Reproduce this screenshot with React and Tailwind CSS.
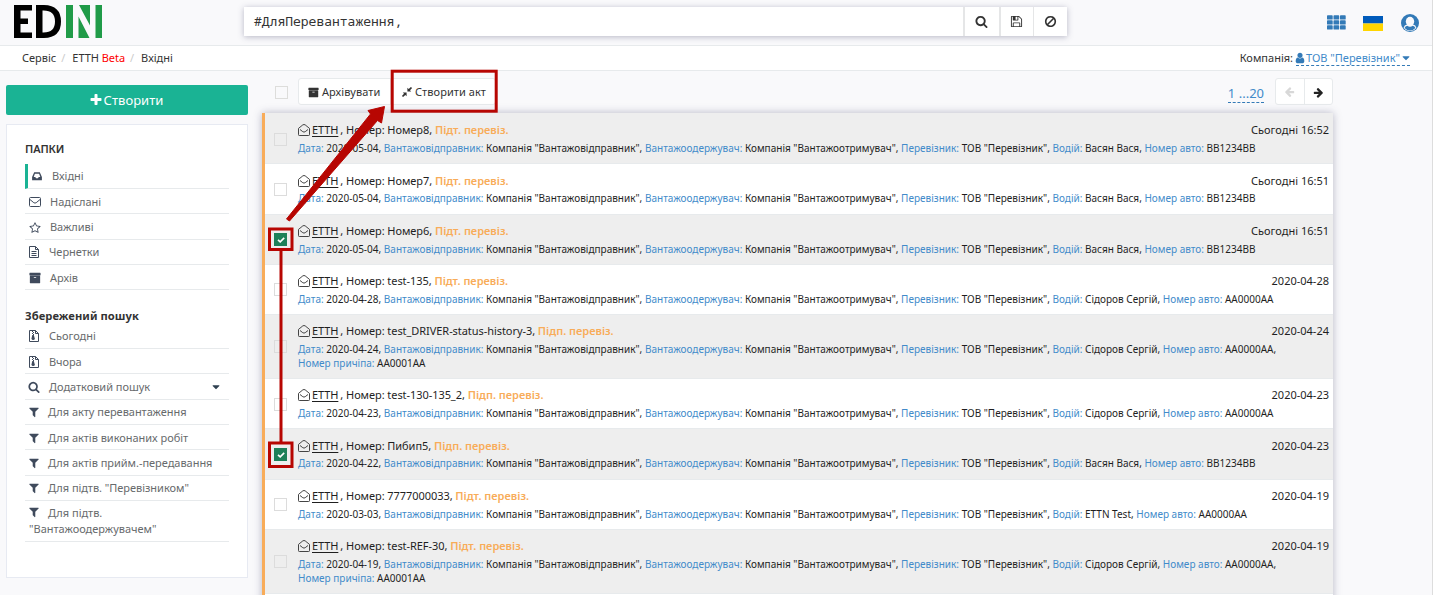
import React from "react";

const PATHS = {
  search: "M1216 832q0-185-131.5-316.5t-316.5-131.5-316.5 131.5-131.5 316.5 131.5 316.5 316.5 131.5 316.5-131.5 131.5-316.5zm512 832q0 52-38 90t-90 38q-54 0-90-38l-343-342q-179 124-399 124-143 0-273.5-55.5t-225-150-150-225-55.5-273.5 55.5-273.5 150-225 225-150 273.5-55.5 273.5 55.5 225 150 150 225 55.5 273.5q0 220-124 399l343 343q37 37 37 90z",
  filter: "M1595 295q17 41-14 70l-493 493v742q0 42-39 59-13 5-25 5-27 0-45-19l-256-256q-19-19-19-45v-486l-493-493q-31-29-14-70 17-39 59-39h1280q42 0 59 39z",
  star: "M1201 1004l306-297-422-62-189-382-189 382-422 62 306 297-73 421 378-199 377 199zm527-357q0 22-26 48l-363 354 86 500q1 7 1 20 0 50-41 50-19 0-40-12l-449-236-449 236q-22 12-40 12-21 0-31.5-14.5t-10.5-35.5q0-6 2-20l86-500-364-354q-25-27-25-48 0-37 56-46l502-73 225-455q19-41 49-41t49 41l225 455 502 73q56 9 56 46z",
  plus: "M1600 736v192q0 40-28 68t-68 28h-416v416q0 40-28 68t-68 28h-192q-40 0-68-28t-28-68v-416h-416q-40 0-68-28t-28-68v-192q0-40 28-68t68-28h416v-416q0-40 28-68t68-28h192q40 0 68 28t28 68v416h416q40 0 68 28t28 68z",
  arrow: "M1600 960q0 54-37 91l-651 651q-39 37-91 37-51 0-90-37l-75-75q-38-38-38-91t38-91l293-293h-704q-52 0-84.5-37.5t-32.5-90.5v-128q0-53 32.5-90.5t84.5-37.5h704l-293-294q-38-36-38-90t38-90l75-75q38-38 90-38 53 0 91 38l651 651q37 35 37 90z",
  ban: "M1440 893q0-161-87-295l-754 753q137 89 297 89 111 0 211.5-43.5t173.5-116.5 116-174.5 43-212.5zm-999 299l755-754q-135-91-300-91-148 0-273 73t-198 199-73 274q0 162 89 299zm1223-299q0 157-61 300t-163.5 246-245 164-298.5 61-298.5-61-245-164-163.5-246-61-300 61-299.5 163.5-245.5 245-164 298.5-61 298.5 61 245 164 163.5 245.5 61 299.5z",
  caret: "M1408 704q0 26-19 45l-448 448q-19 19-45 19t-45-19l-448-448q-19-19-19-45t19-45 45-19h896q26 0 45 19t19 45z",
  save: "M512 1536h768v-384h-768v384zm896 0h128v-896q0-14-10-38.5t-20-34.5l-281-281q-10-10-34-20t-39-10v416q0 40-28 68t-68 28h-576q-40 0-68-28t-28-68v-416h-128v1280h128v-416q0-40 28-68t68-28h832q40 0 68 28t28 68v416zm-384-928v-320q0-13-9.5-22.5t-22.5-9.5h-192q-13 0-22.5 9.5t-9.5 22.5v320q0 13 9.5 22.5t22.5 9.5h192q13 0 22.5-9.5t9.5-22.5zm640 32v928q0 40-28 68t-68 28h-1344q-40 0-68-28t-28-68v-1344q0-40 28-68t68-28h928q40 0 88 20t76 48l280 280q28 28 48 76t20 88z",
  archive: "M1088 832q0-26-19-45t-45-19h-256q-26 0-45 19t-19 45 19 45 45 19h256q26 0 45-19t19-45zm576-192v960q0 26-19 45t-45 19h-1408q-26 0-45-19t-19-45v-960q0-26 19-45t45-19h1408q26 0 45 19t19 45zm64-448v256q0 26-19 45t-45 19h-1536q-26 0-45-19t-19-45v-256q0-26 19-45t45-19h1536q26 0 45 19t19 45z",
  user: "M1536 1399q0 109-62.5 187t-150.5 78h-854q-88 0-150.5-78t-62.5-187q0-85 8.5-160.5t31.5-152 58.5-131 94-89 134.5-34.5q131 128 313 128t313-128q76 0 134.5 34.5t94 89 58.5 131 31.5 152 8.5 160.5zm-256-887q0 159-112.5 271.5t-271.5 112.5-271.5-112.5-112.5-271.5 112.5-271.5 271.5-112.5 271.5 112.5 112.5 271.5z",
};

function Fa({ name, className }) {
  return (
    <svg viewBox="0 0 1792 1792" fill="currentColor" className={`shrink-0 ${className}`}>
      <path d={PATHS[name]} />
    </svg>
  );
}

function SideIcon({ name }) {
  if (name === "mail")
    return (
      <svg viewBox="0 0 12 10" className="h-[10px] w-[12px]" fill="none" stroke="currentColor">
        <rect x=".5" y=".5" width="11" height="9" rx="1" />
        <path d="M.7 2.300 L4.800 5.700 Q6 6.500 7.200 5.700 L11.300 2.300" />
      </svg>
    );
  if (name === "doc" || name === "zip")
    return (
      <svg viewBox="0 0 10 12" className="h-[12px] w-[10px]" fill="none" stroke="currentColor">
        <path d="M.5 .5 H6.500 L9.500 3.500 V11.500 H.5 Z M6.500 .5 V3.500 H9.500" />
        {name === "doc" ? (
          <path d="M2.500 5.500 H7.500 M2.500 7.500 H7.500 M2.500 9.500 H7.500" />
        ) : (
          <>
            <path d="M3 1.500 H4 M4 2.500 H5 M3 3.500 H4 M4 4.500 H5" />
            <path d="M3.300 5 H4.800 L5.800 8.500 Q5.800 10 4.200 10 Q2.500 10 2.500 8.500 Z" fill="currentColor" stroke="none" />
          </>
        )}
      </svg>
    );
  if (name === "inbox")
    return (
      <svg viewBox="0 0 10 9" className="h-[9px] w-[10px]" fill="currentColor">
        <path fillRule="evenodd" d="M2.200 .2 H7.800 L9.900 5 V8.300 H.1 V5 Z M2.900 1.700 L1.700 5 H3.300 L4 6.200 H6 L6.700 5 H8.300 L7.100 1.700 Z" />
      </svg>
    );
  return <Fa name={name} className="-ml-px h-3 w-3" />;
}

function OpenLetter() {
  return (
    <svg viewBox="0 0 12 12" className="h-3 w-3 shrink-0" fill="none" stroke="#444" strokeWidth="1">
      <path d="M.5 4.400 L4.800 .9 Q6 .1 7.200 .9 L11.500 4.400 V10.700 Q11.500 11.500 10.700 11.500 H1.300 Q.5 11.500 .5 10.700 Z" />
      <path d="M2 5.500 L4.800 7.700 Q6 8.500 7.200 7.700 L10 5.500" />
    </svg>
  );
}

function Compress() {
  return (
    <svg viewBox="0 0 12 12" className="h-3 w-3 shrink-0" fill="currentColor">
      <path d="M6.400 5.600 V1.800 L7.700 3 L9.900 .9 L11.100 2.100 L9 4.300 L10.200 5.600 Z M5.600 6.400 V10.200 L4.300 9 L2.100 11.100 L.9 9.900 L3 7.700 L1.800 6.400 Z" />
    </svg>
  );
}

const FOLDERS = [
  { icon: "inbox", label: "Вхідні", box: "h-[25px] pl-[4px] border-l-[3px] border-l-[#1ab394]", gap: "w-[20px]" },
  { icon: "mail", label: "Надіслані", box: "h-[25px] pt-[2px] pl-1", gap: "w-[21px]" },
  { icon: "star", label: "Важливі", box: "h-[26px] pt-[2px] pl-[5px]", gap: "w-[20px]" },
  { icon: "doc", label: "Чернетки", box: "h-[25px] pl-1", gap: "w-[20px]" },
  { icon: "archive", label: "Архів", box: "h-[25px] pt-[2px] pl-[5px]", gap: "w-[20px]" },
];

const SAVED = [
  { icon: "zip", label: "Сьогодні", box: "h-[25px] pl-1", gap: "w-[20px]" },
  { icon: "zip", label: "Вчора", box: "h-[25px] pt-[2px] pl-1", gap: "w-[20px]" },
  { icon: "search", label: "Додатковий пошук", box: "h-[26px] pt-px pl-1", gap: "w-[20px]", caret: true },
  { icon: "filter", label: "Для акту перевантаження", box: "h-[25px] pl-1", gap: "w-[19px]" },
  { icon: "filter", label: "Для актів виконаних робіт", box: "h-[25px] pt-[2px] pl-1", gap: "w-[19px]" },
  { icon: "filter", label: "Для актів прийм.-передавання", box: "h-[26px] pt-px pl-1", gap: "w-[19px]" },
  { icon: "filter", label: 'Для підтв. "Перевізником"', box: "h-[25px] pl-1", gap: "w-[19px]" },
];

function SideItem({ item }) {
  return (
    <div className={`flex items-center border-b border-[#e7eaec] ${item.box}`}>
      <span className={`flex shrink-0 text-[#3f4a5c] ${item.gap}`}>
        <SideIcon name={item.icon} />
      </span>
      <span className="tracking-[-0.03px] whitespace-nowrap">{item.label}</span>
      {item.caret && <Fa name="caret" className="mr-[7px] ml-auto h-[12px] w-[12px] text-[#2f4050]" />}
    </div>
  );
}

const VASYAN = { driver: "Васян Вася", car: "ВВ1234ВВ" };
const SIDOROV = { driver: "Сідоров Сергій", car: "АА0000АА" };
const ROWS = [
  { no: "Номер8", status: "Підт. перевіз.", when: "Сьогодні 16:52", date: "2020-05-04", ...VASYAN, h: "h-[51px] pt-[8px]", sub: "mt-px", box: "pb-[5px]" },
  { no: "Номер7", status: "Підт. перевіз.", when: "Сьогодні 16:51", date: "2020-05-04", ...VASYAN, h: "h-[51px] pt-[8px]" },
  { no: "Номер6", status: "Підт. перевіз.", when: "Сьогодні 16:51", date: "2020-05-04", ...VASYAN, h: "h-[50px] pt-[7px]", sub: "mt-px", checked: true },
  { no: "test-135", status: "Підт. перевіз.", when: "2020-04-28", date: "2020-04-28", ...SIDOROV, h: "h-[50px] pt-[7px]", sub: "mt-px" },
  { no: "test_DRIVER-status-history-3", status: "Підп. перевіз.", when: "2020-04-24", date: "2020-04-24", ...SIDOROV, trailer: "АА0001АА", h: "h-[64px] pt-[7px]", sub: "mt-px" },
  { no: "test-130-135_2", status: "Підп. перевіз.", when: "2020-04-23", date: "2020-04-23", ...SIDOROV, h: "h-[50px] pt-[7px]", sub: "mt-px", box: "pb-[5px]" },
  { no: "Пибип5", status: "Підп. перевіз.", when: "2020-04-23", date: "2020-04-22", ...VASYAN, h: "h-[51px] pt-[8px]", checked: true },
  { no: "7777000033", status: "Підт. перевіз.", when: "2020-04-19", date: "2020-03-03", driver: "ETTN Test", car: "АА0000АА", h: "h-[50px] pt-[7px]", sub: "mt-px" },
  { no: "test-REF-30", status: "Підт. перевіз.", when: "2020-04-19", date: "2020-04-19", ...SIDOROV, trailer: "АА0001АА", h: "h-[64px] pt-[7px]", sub: "mt-px" },
  { no: "", h: "h-[50px]" },
];

function Key({ children }) {
  return <span className="text-[#428bca]">{children}</span>;
}

function Row({ row, index }) {
  const bg = index % 2 === 0 ? "bg-[#eeeeee]" : "bg-white";
  return (
    <div className={`flex shrink-0 border-b border-[#e7eaec] ${bg} ${row.h}`}>
      {row.no && (
        <>
          <div className={`flex w-[33px] shrink-0 items-center pl-[9px] ${row.box || "pb-[7px]"}`}>
            {row.checked ? (
              <span className="flex h-[13px] w-[13px] items-center justify-center bg-[#1d8159]">
                <svg viewBox="0 0 8 6" className="h-[6px] w-2" fill="none" stroke="#fff" strokeWidth="1.600">
                  <path d="M1 2.800 L3.200 4.900 L7.200 .9" />
                </svg>
              </span>
            ) : (
              <span className="h-[13px] w-[13px] border border-[#dcdcdc]" />
            )}
          </div>
          <div className="min-w-0 flex-1 pr-[4px] text-[#1f1f1f]">
            <div className="flex h-[18px] items-center text-[11px] whitespace-pre">
              <OpenLetter />
              <span className="ml-[2px] tracking-[-0.100px] underline underline-offset-2">ЕТТН</span>
              <span className="ml-[2px] tracking-[-0.060px]">, Номер: </span>
              <span className="tracking-[-0.060px]">{row.no}, </span>
              <span className="font-semibold text-[#f8ac59]">{row.status}</span>
              <span className="ml-auto">{row.when}</span>
            </div>
            <div className={`text-[10px] leading-[14px] tracking-[0.006px] whitespace-nowrap ${row.sub || ""}`}>
              <div className="h-px" />
              <Key>Дата:</Key> {row.date}, <Key>Вантажовідправник:</Key> Компанія "Вантажовідправник",{" "}
              <Key>Вантажоодержувач:</Key> Компанія "Вантажоотримувач", <Key>Перевізник:</Key> ТОВ "Перевізник",{" "}
              <Key>Водій:</Key> {row.driver}, <Key>Номер авто:</Key> {row.car}
              {row.trailer && (
                <>
                  ,<br />
                  <Key>Номер причіпа:</Key> {row.trailer}
                </>
              )}
            </div>
          </div>
        </>
      )}
    </div>
  );
}

function Header() {
  return (
    <header className="flex h-[46px] shrink-0 items-start border-b border-[#e7eaec]">
      <svg viewBox="0 0 90 34" className="mt-[4px] ml-[13px] h-[34px] w-[90px]">
        <path d="M1 1H19V6.500H7.500V14.500H15V20H7.500V28.500H19V34H1Z" fill="#000" />
        <path fillRule="evenodd" d="M23 1H31Q48 1.500 48 17.500Q48 33.500 31 34H23Z M29.500 6.500V28.500Q42 29 42 17.500Q42 6 29.500 6.500Z" fill="#000" />
        <path d="M53 1H60V34H53ZM82.500 1H89V34H82.500Z M66 1H77V21.500ZM65.500 12.500L76.500 34H65.500Z" fill="#209b48" />
      </svg>
      <div className="mt-[7px] ml-[141px] flex h-[29px] w-[823px] bg-white shadow-[0_1px_6px_rgba(60,60,100,0.35)]">
        <div className="flex flex-1 items-center pl-[10px] font-['Noto_Sans_Mono','DejaVu_Sans_Mono',monospace] text-[13px] text-[#333]">#ДляПеревантаження,</div>
        <div className="flex w-[36px] items-center justify-center border-l-2 border-[#e5e6e7]"><Fa name="search" className="-ml-px h-[13px] w-[13px]" /></div>
        <div className="flex w-[34px] items-center justify-center border-l-2 border-[#e5e6e7]"><Fa name="save" className="-ml-px h-[13px] w-[13px]" /></div>
        <div className="flex w-[34px] items-center justify-center border-l border-[#e5e6e7]"><Fa name="ban" className="-ml-px h-[13px] w-[13px]" /></div>
      </div>
      <div className="mt-[13px] ml-auto flex items-center pr-[13px] text-[#337ab7]">
        <svg viewBox="0 0 19 15" className="h-[15px] w-[19px]" fill="currentColor">
          {[0, 6.5, 13].map((x) => [0, 5, 10].map((y) => <rect key={`${x}-${y}`} x={x} y={y + 0.300} width="5.700" height="4.300" rx=".7" />))}
        </svg>
        <svg viewBox="0 0 20 15" className="ml-[17px] mt-px h-[15px] w-[20px]">
          <rect width="20" height="7.500" fill="#005bbb" />
          <rect y="7.500" width="20" height="7.500" fill="#ffd500" />
        </svg>
        <svg viewBox="0 0 18 18" className="ml-[18px] mt-px h-[18px] w-[18px]">
          <circle cx="9" cy="9" r="9" fill="currentColor" />
          <path d="M2.600 13.700 Q3.300 10.900 6 10.500 H12 Q14.700 10.900 15.400 13.700 Q13 16.900 9 16.900 Q5 16.900 2.600 13.700Z" fill="#f9f9fb" />
          <path d="M3.600 14 Q4.300 12 6.200 11.800 Q9 13.900 11.800 11.800 Q13.700 12 14.400 14 Q12 16.500 9 16.500 Q6 16.500 3.600 14Z" fill="currentColor" />
          <ellipse cx="9" cy="7.500" rx="4.200" ry="4.700" fill="#f9f9fb" />
        </svg>
      </div>
    </header>
  );
}

function Breadcrumbs() {
  return (
    <nav className="flex h-[25px] shrink-0 items-center border-b border-[#e7eaec] bg-white pr-[22px] pl-[22px] text-[11px]">
      <span>Сервіс</span>
      <span className="ml-[5px] text-[#ccc]">/</span>
      <span className="ml-[7px] tracking-[-0.050px]">ЕТТН <span className="text-[#ff0000]">Beta</span></span>
      <span className="ml-[5px] text-[#ccc]">/</span>
      <span className="ml-[7px]">Вхідні</span>
      <span className="ml-auto">Компанія:</span>
      <span className="ml-[3px] flex h-[16px] items-center border-b border-dashed border-[#337ab7] text-[#337ab7]">
        <Fa name="user" className="-ml-[2px] h-[12px] w-[12px]" />
        <span className="pt-px text-[#428bca]">ТОВ "Перевізник"</span>
        <Fa name="caret" className="-mr-[2px] h-[12px] w-[12px]" />
      </span>
    </nav>
  );
}

function Sidebar() {
  return (
    <aside className="mt-[14px] ml-[6px] w-[242px] shrink-0">
      <button className="flex h-[30px] w-full items-center justify-center rounded-[2px] bg-[#1ab394] pr-[2px] text-[13px] text-white">
        <Fa name="plus" className="h-[14px] w-[14px]" />
        <span className="pt-px pl-px tracking-[0.060px]">Створити</span>
      </button>
      <div className="mt-[9px] h-[454px] border border-[#e7eaf2] bg-white px-[18px] pt-[15px] text-[11px] text-[#676a6c]">
        <h2 className="h-[24px] leading-[18px] font-semibold tracking-[-0.100px] text-[#333]">ПАПКИ</h2>
        {FOLDERS.map((f) => <SideItem key={f.label} item={f} />)}
        <h2 className="mt-[17px] h-[17px] text-[11.200px] leading-[18px] font-bold tracking-[0.050px] text-[#333]">Збережений пошук</h2>
        {SAVED.map((f) => <SideItem key={f.label} item={f} />)}
        <div className="h-[41px] border-b border-[#e7eaec] pt-[4px] pl-1 leading-[16px]">
          <Fa name="filter" className="mr-[8px] -ml-px inline-block h-3 w-3 align-[-1px] text-[#3f4a5c]" />
          Для підтв.<br />"Вантажоодержувачем"
        </div>
      </div>
    </aside>
  );
}

function Toolbar() {
  return (
    <div className="flex h-[42px] shrink-0 items-start pt-[7px] text-[11px]">
      <span className="mt-[8px] ml-[13px] h-[13px] w-[13px] border border-[#dddddb]" />
      <div className="ml-[10px] flex h-[27px] rounded-[3px] border border-[#e7eaec] bg-white">
        <div className="flex w-[92px] items-center border-r border-[#e7eaec] pt-px pl-[9px]">
          <Fa name="archive" className="mr-[3px] h-[11px] w-[11px]" />
          <span className="tracking-[0.060px]">Архівувати</span>
        </div>
        <div className="flex w-[104px] items-center pt-px pl-[10px]">
          <Compress />
          <span className="ml-[2px] tracking-[0.060px]">Створити акт</span>
        </div>
      </div>
      <span className="mt-[6px] ml-auto border-b border-dashed border-[#337ab7] text-[13px] leading-[18px] text-[#428bca]">1 ...20</span>
      <div className="ml-[11px] flex h-[27px] w-[58px] rounded-[3px] border border-[#e7eaec] bg-white">
        <span className="flex flex-1 items-center justify-center border-r border-[#e7eaec] pt-px text-[#d8d8d8]"><Fa name="arrow" className="h-[11px] w-[11px] rotate-180" /></span>
        <span className="flex flex-1 items-center justify-center pt-px text-[#222]"><Fa name="arrow" className="h-[11px] w-[11px]" /></span>
      </div>
    </div>
  );
}

function Annotations() {
  return (
    <svg viewBox="0 0 1433 595" className="pointer-events-none absolute inset-0 h-[595px] w-[1433px]" fill="none" stroke="#b70602" strokeWidth="3">
      <rect x="392.200" y="71.200" width="104" height="40" />
      <rect x="269.500" y="229" width="22.500" height="20.500" />
      <rect x="269.500" y="443" width="22.500" height="23.500" />
      <path d="M281 250V443" />
      <path d="M286.500 219 L289.500 221 L377.500 120.500 L381.500 123 L384.500 106.500 L368 110.500 L370.500 114 Z" fill="#b70602" stroke="#b70602" strokeWidth="1" strokeLinejoin="round" />
    </svg>
  );
}

export default function App() {
  return (
    <div className="relative flex h-[595px] w-[1433px] flex-col overflow-hidden border-r border-[#dddddd] bg-[#f9f9fb] font-['Noto_Sans','Open_Sans',sans-serif] text-[#333]">
      <Header />
      <Breadcrumbs />
      <main className="flex min-h-0 flex-1">
        <Sidebar />
        <section className="ml-[14px] flex w-[1071px] flex-col">
          <Toolbar />
          <div className="flex flex-col border-l-[3px] border-[#f8ac59] shadow-[0_0_8px_rgba(60,60,100,0.35)]">
            {ROWS.map((r, i) => <Row key={i} row={r} index={i} />)}
          </div>
        </section>
      </main>
      <Annotations />
    </div>
  );
}
